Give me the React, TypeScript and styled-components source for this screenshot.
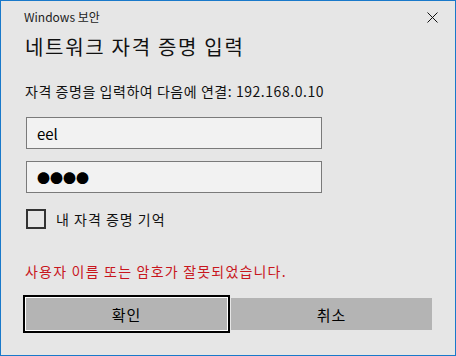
import React from "react";
import styled, { createGlobalStyle } from "styled-components";

const GlobalStyle = createGlobalStyle`
  html, body {
    margin: 0;
    padding: 0;
    background: #e6e6e6;
  }
  * {
    box-sizing: border-box;
  }
`;

const FONT = `"Segoe UI", "Noto Sans CJK KR", "Noto Sans", sans-serif`;

const Window = styled.div`
  width: 456px;
  height: 356px;
  border: 1px solid #1979ca;
  background: #e6e6e6;
  font-family: ${FONT};
  color: #000;
  display: flex;
  flex-direction: column;
`;

const TitleBar = styled.div`
  display: flex;
  align-items: center;
  justify-content: space-between;
  height: 32px;
  padding: 0 17px 0 23px;
`;

const Caption = styled.span`
  font-size: 12px;
  line-height: 16px;
  color: #222;
`;

const Close = styled.button`
  width: 12px;
  height: 12px;
  border: 0;
  padding: 0;
  background: none;
  display: flex;
  align-items: center;
  justify-content: center;
  cursor: pointer;
`;

const Body = styled.div`
  display: flex;
  flex-direction: column;
  padding: 0 0 0 24px;
`;

const Heading = styled.h1`
  margin: 0;
  font-size: 20px;
  font-weight: 400;
  line-height: 28px;
  letter-spacing: 1.7px;
  color: #111;
`;

const Description = styled.p`
  margin: 20px 0 0;
  font-size: 14px;
  line-height: 20px;
  letter-spacing: 0.55px;
  color: #111;
`;

const Field = styled.input<{ $first?: boolean }>`
  width: 296px;
  height: 32px;
  margin: ${(p) => (p.$first ? "16px" : "12px")} 0 0 1px;
  padding: 0 10px;
  border: 1px solid #7a7a7a;
  background: #f2f2f2;
  font-family: ${FONT};
  font-size: 15px;
  color: #000;
  outline: none;
`;

const Dots = styled(Field)`
  font-size: 13px;
  letter-spacing: 0;
`;

const CheckRow = styled.label`
  display: flex;
  align-items: center;
  gap: 10px;
  margin: 16px 0 0 1px;
  font-size: 14px;
  line-height: 20px;
  letter-spacing: 1px;
  color: #111;
`;

const Box = styled.span`
  width: 20px;
  height: 20px;
  border: 2px solid #333;
`;

const Error = styled.p`
  margin: 32px 0 0;
  font-size: 14px;
  line-height: 20px;
  letter-spacing: 1.2px;
  color: #c8161d;
`;

const Buttons = styled.div`
  display: flex;
  align-items: center;
  gap: 1px;
  margin: 14px 0 0 -2px;
`;

const Button = styled.button<{ $focused?: boolean }>`
  width: ${(p) => (p.$focused ? "207px" : "201px")};
  height: ${(p) => (p.$focused ? "38px" : "32px")};
  border: ${(p) => (p.$focused ? "2px solid #000" : "0")};
  box-shadow: ${(p) => (p.$focused ? "inset 0 0 0 1px #fff" : "none")};
  background: #b4b4b4;
  font-family: ${FONT};
  font-size: 15px;
  letter-spacing: 1px;
  color: #000;
  padding: 0;
  cursor: pointer;
`;

export default function App() {
  return (
    <>
      <GlobalStyle />
      <Window>
        <TitleBar>
          <Caption>Windows 보안</Caption>
          <Close aria-label="닫기">
            <svg width="11" height="11" viewBox="0 0 11 11">
              <path d="M0.5 0.5L10.5 10.5M10.5 0.5L0.5 10.5" stroke="#111" strokeWidth="1" />
            </svg>
          </Close>
        </TitleBar>
        <Body>
          <Heading>네트워크 자격 증명 입력</Heading>
          <Description>자격 증명을 입력하여 다음에 연결: 192.168.0.10</Description>
          <Field $first defaultValue="eel" readOnly />
          <Dots defaultValue="●●●●" readOnly />
          <CheckRow>
            <Box />
            내 자격 증명 기억
          </CheckRow>
          <Error>사용자 이름 또는 암호가 잘못되었습니다.</Error>
          <Buttons>
            <Button $focused>확인</Button>
            <Button>취소</Button>
          </Buttons>
        </Body>
      </Window>
    </>
  );
}
